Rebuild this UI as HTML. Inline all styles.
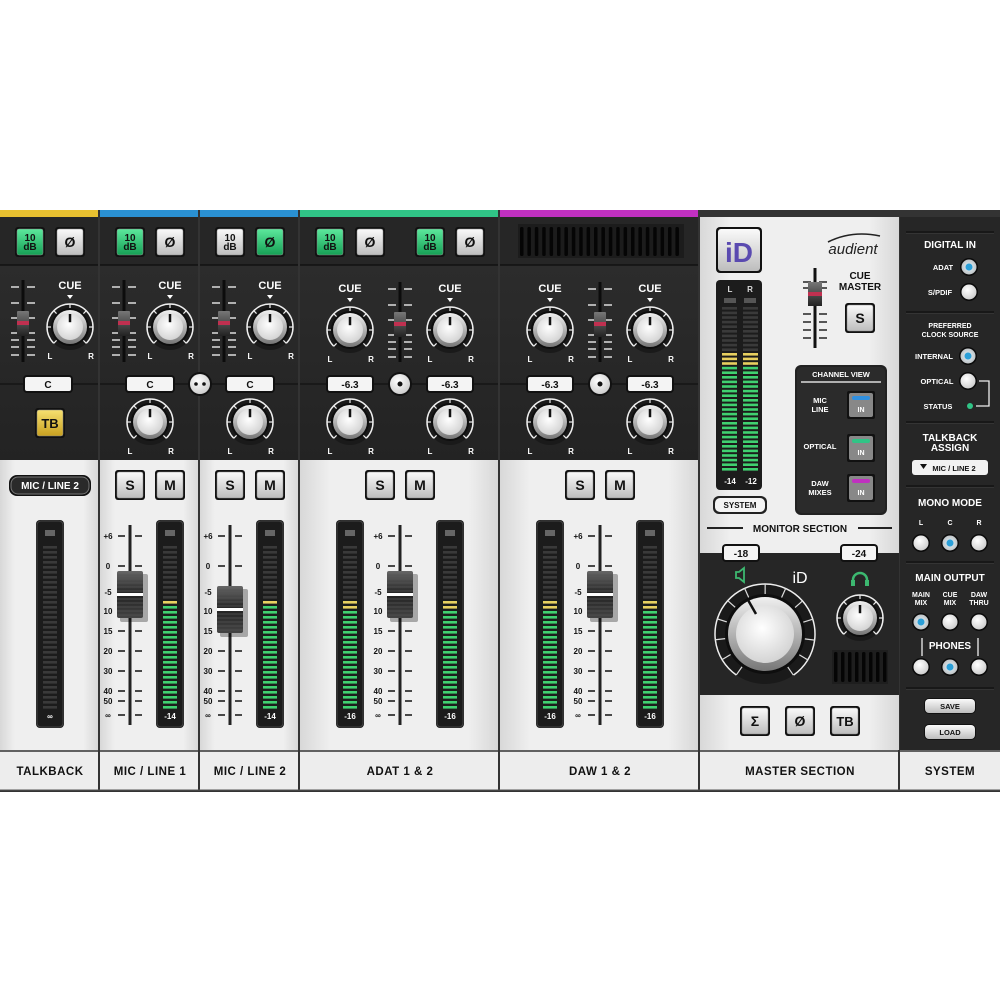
<!DOCTYPE html>
<html><head><meta charset="utf-8"><style>
html,body{margin:0;padding:0;background:#fff;width:1000px;height:1000px;overflow:hidden}
svg text{font-family:"Liberation Sans",sans-serif;font-weight:bold}
</style></head><body>
<div id="root"></div>
<script>
var s=[];
function R(x,y,w,h,f,ex){s.push('<rect x="'+x+'" y="'+y+'" width="'+w+'" height="'+h+'" fill="'+f+'" '+(ex||'')+'/>');}
function T(x,y,t,sz,f,ex){s.push('<text x="'+x+'" y="'+y+'" font-size="'+sz+'" fill="'+f+'" text-anchor="middle" '+(ex||'')+'>'+t+'</text>');}
function L(x1,y1,x2,y2,c,w){s.push('<line x1="'+x1+'" y1="'+y1+'" x2="'+x2+'" y2="'+y2+'" stroke="'+c+'" stroke-width="'+(w||1)+'"/>');}
function C(cx,cy,r,f,ex){s.push('<circle cx="'+cx+'" cy="'+cy+'" r="'+r+'" fill="'+f+'" '+(ex||'')+'/>');}
function btn(x,y,w,h,t,kind,sz){
  var g=kind=='g'?'url(#gg)':kind=='y'?'url(#gy)':'url(#gw)';
  R(x-2,y-2,w+4,h+4,'#111','rx="3"');R(x,y,w,h,g,'rx="2" stroke="#888" stroke-width="0.5"');
  if(t=='10dB'){T(x+w/2,y+h/2-1,'10',10,'#111');T(x+w/2,y+h/2+8,'dB',10,'#111');}
  else T(x+w/2,y+h/2+5,t,sz||14,'#111');
}
function knob(cx,cy,r,ang){
  var rr=r+7;
  var a0=135*Math.PI/180,a1=405*Math.PI/180;
  var x0=cx+rr*Math.cos(a0),y0=cy+rr*Math.sin(a0),x1=cx+rr*Math.cos(a1),y1=cy+rr*Math.sin(a1);
  C(cx,cy,rr,'#1a1a1a');
  s.push('<path d="M'+x0+' '+y0+' A'+rr+' '+rr+' 0 1 1 '+x1+' '+y1+'" fill="none" stroke="#eee" stroke-width="1.5"/>');
  for(var i=0;i<=6;i++){var a=(135+45*i)*Math.PI/180;L(cx+(rr-5)*Math.cos(a),cy+(rr-5)*Math.sin(a),cx+rr*Math.cos(a),cy+rr*Math.sin(a),'#eee',1.2);}
  C(cx,cy,r+3,'#0e0e0e');C(cx,cy,r+1,'url(#kr)');C(cx,cy,r-3,'url(#kb)');
  var a=(ang||-90)*Math.PI/180;
  L(cx+r*0.3*Math.cos(a),cy+r*0.3*Math.sin(a),cx+(r-3)*Math.cos(a),cy+(r-3)*Math.sin(a),'#111',2.5);
}
function cueKnob(cx,cy){T(cx,cy-38,'CUE',11,'#fff');s.push('<path d="M'+(cx-3)+' '+(cy-32)+' h6 l-3 4z" fill="#fff"/>');knob(cx,cy,16);T(cx-20,cy+32,'L',8,'#fff');T(cx+21,cy+32,'R',8,'#fff');}
function panKnob(cx,cy){knob(cx,cy,16);T(cx-20,cy+32,'L',8,'#fff');T(cx+21,cy+32,'R',8,'#fff');}
function miniFader(x,y1,y2,cap){
  L(x,y1,x,y2,'#0c0c0c',3);
  var ys=[287,303,318,333,340,347,355];
  for(var i=0;i<ys.length;i++){var yy=ys[i]-287+y1+7;L(x-12,yy,x-4,yy,'#ddd',1.5);L(x+4,yy,x+12,yy,'#ddd',1.5);}
  R(x-6,cap,12,25,'url(#fc)','rx="1"');R(x-6,cap+10,12,4,'#c03050');
}
function valBox(cx,cy,t,w){w=w||46;R(cx-w/2-2,cy-9,w+4,18,'#111','rx="4"');R(cx-w/2,cy-7,w,14,'#f4f4f4','rx="2"');T(cx,cy+4,t,10,'#111');}
function meter(x,y,w,h,yel,lab){
  R(x,y,w,h,'#1c1c1c','rx="4"');R(x+1,y+1,w-2,h-2,'none','rx="4" stroke="#444" stroke-width="1"');
  R(x+w/2-5,y+10,10,6,'#666');
  for(var yy=y+26;yy<y+h-20;yy+=5){var c='#3a3a3a';if(yel&&yy>=yel&&yy<yel+6)c='#e8d060';else if(yel&&yy>=yel+6)c='#40d070';R(x+7,yy,w-14,2.6,c);}
  T(x+w/2,y+h-9,lab,8,'#fff');
}
function bigFader(x,cap){
  L(x,525,x,725,'#222',3);
  var sc=[['+6',536],['0',566],['-5',592],['10',611],['15',631],['20',651],['30',671],['40',691],['50',701],['∞',715]];
  for(var i=0;i<sc.length;i++){var yy=sc[i][1];T(x-22,yy+3,sc[i][0],8,'#111');L(x-12,yy,x-5,yy,'#111',1.5);L(x+5,yy,x+12,yy,'#111',1.5);}
  R(x-10,cap+3,28,48,'rgba(0,0,0,0.3)','rx="2"');
  R(x-13,cap,26,47,'url(#fb)','rx="2"');
  for(var k=4;k<45;k+=4)L(x-13,cap+k,x+13,cap+k,'#555',0.8);
  R(x-13,cap+22,26,3,'#fff');
}
function radio(cx,cy,on){C(cx,cy,9,'#0a0a0a');C(cx,cy,7.5,on?'url(#rb)':'url(#rw)');if(on)C(cx,cy,3.5,'#2a9fd8');}

s.push('<defs>'+
'<linearGradient id="gg" x1="0" y1="0" x2="0" y2="1"><stop offset="0" stop-color="#5ce89c"/><stop offset="1" stop-color="#16a055"/></linearGradient>'+
'<linearGradient id="gw" x1="0" y1="0" x2="0" y2="1"><stop offset="0" stop-color="#fafafa"/><stop offset="1" stop-color="#bdbdbd"/></linearGradient>'+
'<linearGradient id="gy" x1="0" y1="0" x2="0" y2="1"><stop offset="0" stop-color="#f6e070"/><stop offset="1" stop-color="#c8a020"/></linearGradient>'+
'<linearGradient id="fc" x1="0" y1="0" x2="0" y2="1"><stop offset="0" stop-color="#777"/><stop offset="1" stop-color="#222"/></linearGradient>'+
'<linearGradient id="fb" x1="0" y1="0" x2="0" y2="1"><stop offset="0" stop-color="#666"/><stop offset=".5" stop-color="#222"/><stop offset="1" stop-color="#444"/></linearGradient>'+
'<radialGradient id="kb" cx=".45" cy=".4" r=".6"><stop offset="0" stop-color="#fff"/><stop offset="1" stop-color="#d4d4d4"/></radialGradient>'+
'<linearGradient id="kr" x1="0" y1="0" x2="0" y2="1"><stop offset="0" stop-color="#f0f0f0"/><stop offset="1" stop-color="#777"/></linearGradient>'+
'<radialGradient id="rw" cx=".4" cy=".35" r=".7"><stop offset="0" stop-color="#fff"/><stop offset="1" stop-color="#ccc"/></radialGradient>'+
'<radialGradient id="rb" cx=".5" cy=".5" r=".6"><stop offset="0" stop-color="#e0f4ff"/><stop offset="1" stop-color="#bbb"/></radialGradient>'+
'<linearGradient id="lg" x1="0" y1="0" x2="1" y2="0"><stop offset="0" stop-color="#d8d8d8"/><stop offset=".15" stop-color="#efefef"/><stop offset=".85" stop-color="#efefef"/><stop offset="1" stop-color="#d8d8d8"/></linearGradient>'+
'<linearGradient id="dk" x1="0" y1="0" x2="0" y2="1"><stop offset="0" stop-color="#2e2e2e"/><stop offset="1" stop-color="#232323"/></linearGradient>'+
'</defs>');

R(0,210,1000,582,'#333');
var bars=[[0,98,'#e8c030'],[100,198,'#2a90d2'],[300,198,'#30c486'],[500,198,'#c030c0']];
for(var i=0;i<bars.length;i++)R(bars[i][0],210,bars[i][1],7,bars[i][2]);
var cols=[[0,98],[100,98],[200,98],[300,198],[500,198]];
for(var i=0;i<cols.length;i++){var x=cols[i][0],w=cols[i][1];R(x,217,w,243,'url(#dk)');R(x,217,w,48,'#262626');L(x,265,x+w,265,'#111',1.5);L(x,384,x+w,384,'#151515',1.5);
 R(x,460,w,290,'url(#lg)');R(x,750,w,40,'#ededed');L(x,751,x+w,751,'#333',1.5);}
[99,199,299,499,699,899].forEach(function(x){L(x,210,x,790,'#333',2);});

btn(17,229,26,26,'10dB','g');btn(57,229,26,26,'Ø','w');
miniFader(23,280,362,311);cueKnob(70,327);valBox(48,384,'C',46);
btn(37,410,26,26,'TB','y',13);
R(9,475,82,21,'#111','rx="8"');R(11,477,78,17,'#2a2a2a','rx="7" stroke="#777" stroke-width="1"');T(50,489,'MIC / LINE 2',10,'#fff');
meter(36,520,28,208,0,'∞');
btn(117,229,26,26,'10dB','g');btn(157,229,26,26,'Ø','w');
miniFader(124,280,362,311);cueKnob(170,327);valBox(150,384,'C',46);panKnob(150,422);
btn(217,229,26,26,'10dB','w');btn(257,229,26,26,'Ø','g');
miniFader(224,280,362,311);cueKnob(270,327);valBox(250,384,'C',46);panKnob(250,422);
C(200,384,12,'#111');C(200,384,10,'url(#rw)');C(196,384,1.8,'#111');C(204,384,1.8,'#111');
for(var k=0;k<2;k++){var ox=100+k*100;btn(ox+17,472,26,26,'S','w');btn(ox+57,472,26,26,'M','w');bigFader(ox+30,k?586:571);meter(ox+56,520,28,208,597,'-14');}
for(var k=0;k<2;k++){var ox=300+k*200;
 if(k==0){btn(317,229,26,26,'10dB','g');btn(357,229,26,26,'Ø','w');btn(417,229,26,26,'10dB','g');btn(457,229,26,26,'Ø','w');}
 else{R(518,224,166,34,'#1c1c1c');for(var g=0;g<22;g++)R(520+g*7.4,227,3.5,29,'#050505','rx="1.5"');}
 cueKnob(ox+50,330);cueKnob(ox+150,330);miniFader(ox+100,282,362,312);
 valBox(ox+50,384,'-6.3',44);valBox(ox+150,384,'-6.3',44);
 C(ox+100,384,12,'#111');C(ox+100,384,10,'url(#rw)');C(ox+100,384,2.5,'#111');
 panKnob(ox+50,422);panKnob(ox+150,422);
 btn(ox+67,472,26,26,'S','w');btn(ox+107,472,26,26,'M','w');
 meter(ox+36,520,28,208,601,'-16');meter(ox+136,520,28,208,601,'-16');bigFader(ox+100,571);
}
R(700,217,199,533,'url(#lg)');R(700,750,199,40,'#ededed');L(700,751,899,751,'#333',1.5);
R(716,227,46,46,'#111','rx="4"');R(718,229,42,42,'url(#gw)','rx="3"');
T(739,262,'iD',28,'#5a4ab0');
s.push('<path d="M828 242 Q852 230 880 236" fill="none" stroke="#222" stroke-width="1.6"/>');
T(853,254,'audient',15,'#222','font-style="italic" style="font-weight:normal"');
R(716,280,46,210,'#1c1c1c','rx="4"');T(730,292,'L',8,'#ddd');T(750,292,'R',8,'#ddd');
R(724,298,12,5,'#555');R(744,298,12,5,'#555');
for(var yy=307;yy<470;yy+=4.6){var c=yy<350?'#3a3a3a':yy<364?'#e8d060':'#40d070';R(722,yy,15,2.6,c);R(743,yy,15,2.6,c);}
T(730,484,'-14',8,'#fff');T(751,484,'-12',8,'#fff');
R(713,496,54,18,'#222','rx="6"');R(715,498,50,14,'#f4f4f4','rx="5"');T(740,508,'SYSTEM',8,'#111');
L(815,268,815,348,'#111',3);[282,288,314,322,330,338].forEach(function(y){L(803,y,811,y,'#222',1.5);L(819,y,827,y,'#222',1.5);});
R(808,282,14,24,'url(#fc)');R(808,292,14,4,'#c03050');
T(860,279,'CUE',10,'#111');T(860,290,'MASTER',10,'#111');btn(847,305,26,26,'S','w');
R(795,365,92,150,'#222','rx="6"');R(797,367,88,146,'#2b2b2b','rx="5"');T(841,377,'CHANNEL VIEW',7.5,'#fff');L(801,382,881,382,'#ddd',1.5);
[[403,'MIC','LINE','#3090e0'],[446,'OPTICAL','','#30c486'],[486,'DAW','MIXES','#c030c0']].forEach(function(r){
 if(r[2]){T(820,r[0],r[1],7.5,'#fff');T(820,r[0]+9,r[2],7.5,'#fff');}else T(820,r[0]+3,r[1],7.5,'#fff');
 R(847,r[0]-12,28,28,'#111','rx="2"');R(849,r[0]-10,24,24,'#888','rx="2"');R(852,r[0]-7,18,4,r[3],'rx="2"');T(861,r[0]+9,'IN',7,'#fff');
});
L(707,528,743,528,'#222',2);L(858,528,892,528,'#222',2);T(800,532,'MONITOR SECTION',10,'#111');
R(700,553,199,142,'#262626');
valBox(741,553,'-18',34);valBox(859,553,'-24',34);
s.push('<path d="M736 572 h3 l5 -4 v14 l-5 -4 h-3z" fill="none" stroke="#3cb870" stroke-width="1.8"/>');
T(800,583,'iD',16,'#fff','style="font-weight:normal"');
s.push('<path d="M853 585 v-5 a7 7 0 0 1 14 0 v5" fill="none" stroke="#3cb870" stroke-width="2.5"/>');R(851,580,4,6,'#3cb870');R(865,580,4,6,'#3cb870');
(function(){var cx=765,cy=634,rr=50;C(cx,cy,rr,'#1a1a1a');var a0=125*Math.PI/180,a1=415*Math.PI/180;
 s.push('<path d="M'+(cx+rr*Math.cos(a0))+' '+(cy+rr*Math.sin(a0))+' A'+rr+' '+rr+' 0 1 1 '+(cx+rr*Math.cos(a1))+' '+(cy+rr*Math.sin(a1))+'" fill="none" stroke="#eee" stroke-width="1.5"/>');
 for(var i=0;i<=12;i++){var a=(125+24.2*i)*Math.PI/180;L(cx+(rr-10)*Math.cos(a),cy+(rr-10)*Math.sin(a),cx+rr*Math.cos(a),cy+rr*Math.sin(a),'#ddd',1.2);}
 C(cx,cy,40,'#0e0e0e');C(cx,cy,37,'url(#kr)');C(cx,cy,29,'url(#kb)');L(748,600,756,614,'#111',2.5);})();
knob(860,618,16);
R(832,650,56,34,'#1e1e1e');for(var g=0;g<8;g++)R(834+g*7,652,3.5,30,'#050505','rx="1.5"');
btn(742,708,26,26,'Σ','w');btn(787,708,26,26,'Ø','w');btn(832,708,26,26,'TB','w',13);
R(900,217,100,533,'#262626');R(900,750,100,40,'#ededed');L(900,751,1000,751,'#333',1.5);
[232,312,422,486,562,688].forEach(function(y){L(906,y,994,y,'#181818',2);L(906,y+1.5,994,y+1.5,'#3a3a3a',0.8);});
T(950,248,'DIGITAL IN',10,'#fff');
T(943,270,'ADAT',7.5,'#fff');radio(969,267,1);T(940,295,'S/PDIF',7.5,'#fff');radio(969,292,0);
T(950,328,'PREFERRED',7,'#fff');T(950,337,'CLOCK SOURCE',7,'#fff');
T(934,359,'INTERNAL',7.5,'#fff');radio(968,356,1);T(937,384,'OPTICAL',7.5,'#fff');radio(968,381,0);
T(938,409,'STATUS',7.5,'#fff');C(970,406,3,'#30c486');
s.push('<path d="M979 381 h10 v25 h-13" fill="none" stroke="#eee" stroke-width="1.3"/>');
T(950,441,'TALKBACK',10,'#fff');T(950,451,'ASSIGN',10,'#fff');
R(912,460,76,15,'#f2f2f2','rx="3"');s.push('<path d="M920 464 h7 l-3.5 5z" fill="#111"/>');T(954,471,'MIC / LINE 2',7.5,'#111');
T(950,506,'MONO MODE',10,'#fff');T(921,525,'L',7,'#fff');T(950,525,'C',7,'#fff');T(979,525,'R',7,'#fff');
radio(921,543,0);radio(950,543,1);radio(979,543,0);
T(950,581,'MAIN OUTPUT',10,'#fff');
T(921,597,'MAIN',7,'#fff');T(921,605,'MIX',7,'#fff');T(950,597,'CUE',7,'#fff');T(950,605,'MIX',7,'#fff');T(979,597,'DAW',7,'#fff');T(979,605,'THRU',7,'#fff');
radio(921,622,1);radio(950,622,0);radio(979,622,0);
T(950,649,'PHONES',10,'#fff');L(922,638,922,656,'#eee',1.3);L(978,638,978,656,'#eee',1.3);
radio(921,667,0);radio(950,667,1);radio(979,667,0);
R(924,698,52,16,'#111','rx="5"');R(925,699,50,14,'url(#gw)','rx="4"');T(950,709,'SAVE',7.5,'#111');
R(924,724,52,16,'#111','rx="5"');R(925,725,50,14,'url(#gw)','rx="4"');T(950,735,'LOAD',7.5,'#111');
[[50,'TALKBACK'],[150,'MIC / LINE 1'],[250,'MIC / LINE 2'],[400,'ADAT 1 &amp; 2'],[600,'DAW 1 &amp; 2'],[800,'MASTER SECTION'],[950,'SYSTEM']].forEach(function(l){T(l[0],775,l[1],11.5,'#111','letter-spacing="0.5"');});
[99,199,299,499,699,899].forEach(function(x){L(x,750,x,790,'#333',2);});
L(0,790,1000,790,'#555',1);
document.getElementById('root').innerHTML='<svg xmlns="http://www.w3.org/2000/svg" width="1000" height="1000" viewBox="0 0 1000 1000" style="display:block">'+s.join('')+'</svg>';
</script>
</body></html>
